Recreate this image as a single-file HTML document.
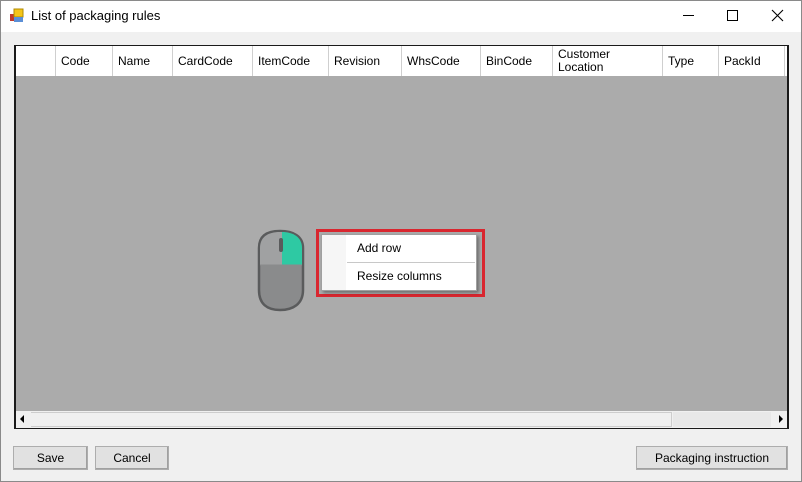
<!DOCTYPE html>
<html><head><style>
*{margin:0;padding:0;box-sizing:border-box}
body{width:802px;height:482px;background:#f0f0f0;font-family:"Liberation Sans",sans-serif;font-size:12px;color:#000;position:relative;overflow:hidden}
.abs{position:absolute}
#win{left:0;top:0;width:802px;height:482px;border:1px solid #8a8a8a}
#title{left:1px;top:1px;width:800px;height:31px;background:#fff}
.hdr{top:46px;height:30px;background:#fff}
.col{position:absolute;top:0;height:30px;border-left:1px solid #cfcfcf;padding-left:5px;line-height:30px;font-size:12px}
.btn{background:#e1e1e1;border:1px solid #adadad;text-align:center;line-height:22px;font-size:12px;box-shadow:inset -1px -1px 0 #a0a0a0}
</style></head><body>
<div id="win" class="abs"></div>
<div id="title" class="abs"></div>
<svg class="abs" style="left:9px;top:8px" width="16" height="16">
<rect x="1" y="6" width="5" height="7" fill="#c0392b"/><rect x="5" y="1" width="9" height="8" fill="#f5c518" stroke="#b08a00" stroke-width="1"/><rect x="5" y="9" width="9" height="5" fill="#5b8fd6"/></svg>
<div class="abs" style="left:31px;top:8px;font-size:13px">List of packaging rules</div>
<div class="abs" style="left:683px;top:15px;width:11px;height:1px;background:#000"></div>
<div class="abs" style="left:727px;top:10px;width:11px;height:11px;border:1px solid #000"></div>
<svg class="abs" style="left:771px;top:9px" width="13" height="13"><path d="M1 1L12 12M12 1L1 12" stroke="#000" stroke-width="1.1"/></svg>

<div class="abs" style="left:14px;top:45px;width:775px;height:384px;border:2px solid #1a1a1a;background:#ababab"></div>
<div class="abs hdr" style="left:16px;width:771px">
<div class="col" style="left:0;border:none"></div>
<div class="col" style="left:39px">Code</div>
<div class="col" style="left:96px">Name</div>
<div class="col" style="left:156px">CardCode</div>
<div class="col" style="left:236px">ItemCode</div>
<div class="col" style="left:312px">Revision</div>
<div class="col" style="left:385px">WhsCode</div>
<div class="col" style="left:464px">BinCode</div>
<div class="col" style="left:536px;line-height:13px;padding-top:2px">Customer<br>Location</div>
<div class="col" style="left:646px">Type</div>
<div class="col" style="left:702px">PackId</div>
<div class="col" style="left:768px"></div>
</div>
<div class="abs" style="left:16px;top:411px;width:771px;height:17px;background:#f0f0f0"></div>
<div class="abs" style="left:31px;top:412px;width:641px;height:15px;background:#f0f0f0;border:1px solid #cdcdcd;border-left:none"></div>
<div class="abs" style="left:673px;top:412px;width:98px;height:15px;background:#e8e8e8"></div>
<svg class="abs" style="left:18px;top:413px" width="10" height="12"><path d="M6 2L2 6L6 10Z" fill="#000"/></svg>
<svg class="abs" style="left:776px;top:413px" width="10" height="12"><path d="M3 2L7 6L3 10Z" fill="#000"/></svg>

<svg class="abs" style="left:255px;top:228px" width="54" height="86">
<path d="M25 3C12 3 4 8 4 20V62C4 76 12 82 25 82C38 82 48 76 48 62V20C48 8 38 3 25 3Z" fill="#8a8b8c" stroke="#5a5b5c" stroke-width="2.5"/>
<path d="M27 4C38 4 47 9 47 20V37H27Z" fill="#2ec9a3"/>
<path d="M25 4C13 4 5 9 5 20V37H27V4Z" fill="#a0a1a2"/>
<path d="M5 37H47" stroke="#8a8b8c" stroke-width="1"/>
<rect x="24" y="10" width="4" height="14" rx="2" fill="#5a5b5c"/>
</svg>

<div class="abs" style="left:316px;top:229px;width:169px;height:68px;border:3px solid #d9262f"></div>
<div class="abs" style="left:321px;top:234px;width:156px;height:57px;background:#fff;border:1px solid #a0a0a0;box-shadow:2px 2px 3px rgba(0,0,0,.35)"></div>
<div class="abs" style="left:322px;top:235px;width:24px;height:55px;background:#f6f6f6"></div>
<div class="abs" style="left:357px;top:241px;font-size:12px">Add row</div>
<div class="abs" style="left:347px;top:262px;width:128px;height:1px;background:#c8c8c8"></div>
<div class="abs" style="left:357px;top:269px;font-size:12px">Resize columns</div>

<div class="abs btn" style="left:13px;top:446px;width:75px;height:24px">Save</div>
<div class="abs btn" style="left:95px;top:446px;width:74px;height:24px">Cancel</div>
<div class="abs btn" style="left:636px;top:446px;width:152px;height:24px">Packaging instruction</div>
</body></html>
